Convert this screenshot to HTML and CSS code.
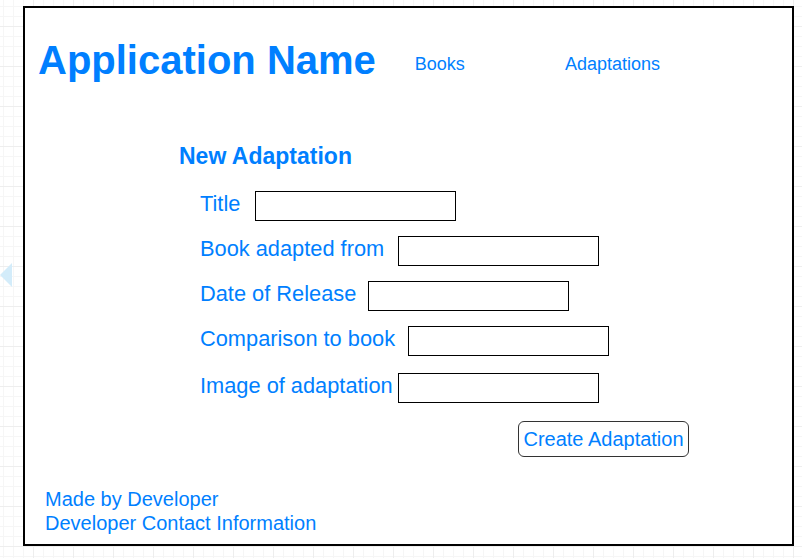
FILE: index.html
```html
<!DOCTYPE html>
<html lang="en">
<head>
<meta charset="utf-8">
<title>New Adaptation</title>
<link rel="stylesheet" href="styles.css">
</head>
<body>
<div class="pager-arrow"></div>
<div class="frame">
  <header class="header">
    <h1 class="app-name">Application Name</h1>
    <nav class="nav">
      <a class="nav-link" href="#">Books</a>
      <a class="nav-link nav-link-second" href="#">Adaptations</a>
    </nav>
  </header>
  <main class="content">
    <h2 class="form-title">New Adaptation</h2>
    <form class="form">
      <div class="row">
        <label class="label w-title">Title</label>
        <input class="field" type="text">
      </div>
      <div class="row">
        <label class="label w-book">Book adapted from</label>
        <input class="field" type="text">
      </div>
      <div class="row">
        <label class="label w-date">Date of Release</label>
        <input class="field" type="text">
      </div>
      <div class="row">
        <label class="label w-comp">Comparison to book</label>
        <input class="field" type="text">
      </div>
      <div class="row row-last">
        <label class="label w-image">Image of adaptation</label>
        <input class="field" type="text">
      </div>
      <div class="actions">
        <button class="btn" type="button">Create Adaptation</button>
      </div>
    </form>
  </main>
  <footer class="footer">
    <div>Made by Developer</div>
    <div>Developer Contact Information</div>
  </footer>
</div>
</body>
</html>
```
FILE: styles.css
```css
* { box-sizing: border-box; }

html, body {
  margin: 0;
  padding: 0;
}

body {
  width: 802px;
  height: 558px;
  overflow: hidden;
  position: relative;
  font-family: "Liberation Sans", Arial, Helvetica, sans-serif;
  color: #007fff;
  background-color: #ffffff;
  background-image:
    linear-gradient(to right, #eeeeee 1px, transparent 1px),
    linear-gradient(to bottom, #eeeeee 1px, transparent 1px),
    linear-gradient(to right, #f6f6f6 1px, transparent 1px),
    linear-gradient(to bottom, #f6f6f6 1px, transparent 1px);
  background-size: 40px 40px, 40px 40px, 10px 10px, 10px 10px;
  background-position: 33px 0, 0 26px, 3px 0, 0 6px;
  padding-top: 6px;
  padding-left: 23px;
}

.pager-arrow {
  position: absolute;
  left: 0;
  top: 263px;
  width: 0;
  height: 0;
  border-top: 12.5px solid transparent;
  border-bottom: 12.5px solid transparent;
  border-right: 12px solid #d3ecfa;
}

.frame {
  width: 771px;
  height: 540px;
  border: 2px solid #000;
  background: #fff;
  display: flex;
  flex-direction: column;
}

.header {
  display: flex;
  align-items: flex-start;
  padding-top: 28.5px;
  padding-left: 13px;
}

.app-name {
  margin: 0;
  font-size: 40px;
  line-height: 46px;
  font-weight: bold;
  color: #007fff;
}

.nav {
  display: flex;
  margin-top: 16.5px;
  margin-left: 39px;
  gap: 100px;
}

.nav-link {
  font-size: 18px;
  line-height: 22px;
  color: #007fff;
  text-decoration: none;
}

.content {
  padding-left: 154px;
}

.form-title {
  margin: 60.5px 0 0 0;
  font-size: 23px;
  line-height: 26px;
  font-weight: bold;
  color: #007fff;
}

.form {
  margin: 22px 0 0 21px;
  display: flex;
  flex-direction: column;
}

.row {
  display: flex;
  align-items: flex-start;
  height: 30px;
  margin-bottom: 15px;
}

.row-last {
  margin-top: 2px;
  margin-bottom: 0;
}

.label {
  font-size: 21.8px;
  line-height: 25px;
  white-space: nowrap;
  color: #007fff;
}

.w-title { width: 55px; }
.w-book { width: 198px; }
.w-date { width: 168px; }
.w-comp { width: 208px; }
.w-image { width: 198px; }

.field {
  width: 201px;
  height: 30px;
  border: 1px solid #000;
  margin: 0;
  padding: 0;
  background: #fff;
  outline: none;
  font: inherit;
}

.actions {
  margin-top: 18px;
  padding-left: 318px;
}

.btn {
  width: 171px;
  height: 36px;
  border: 1px solid #333;
  border-radius: 6px;
  background: #fff;
  color: #007fff;
  font-family: "Liberation Sans", Arial, Helvetica, sans-serif;
  font-size: 20px;
  line-height: 24px;
  padding: 0;
  margin: 0;
}

.footer {
  margin-top: 31px;
  padding-left: 20px;
  font-size: 20px;
  line-height: 23.5px;
  color: #007fff;
}
```
